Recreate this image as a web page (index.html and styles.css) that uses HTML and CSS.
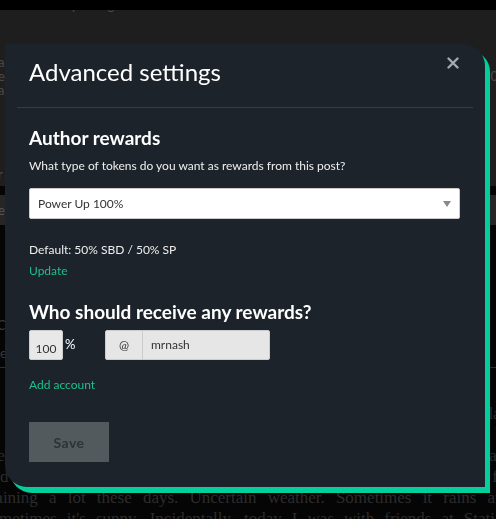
FILE: index.html
```html
<!DOCTYPE html>
<html lang="en">
<head>
  <meta charset="UTF-8">
  <meta name="viewport" content="width=device-width, initial-scale=1.0">
  <title>Advanced settings</title>
  <link rel="stylesheet" href="styles.css">
</head>
<body>

  <div class="page">
    <div class="topbar"></div>
    <div class="hero">
      <p class="hero-meta">posting to</p>
      <p class="hero-line"><span>ag</span></p>
      <p class="hero-line"><span>e</span><span>0</span></p>
      <p class="hero-line"><span>a</span></p>
      <p class="hero-line low"><span>r</span></p>
    </div>
    <div class="tabs">e</div>
    <div class="article">
      <p class="tag-row">
        <span>Categories</span>
        <span>ies</span>
      </p>
      <p class="article-text">
        <span>in this town it has been a rainy week and it is the same as last</span>
        <span>so grey outside that nobody wants to enjoy the weekend by</span>
        <span>the sea or the long walk out to the park and the coffee place</span>
        <span>and the river where we usually meet up on sundays for</span>
        <span>Raining a lot these days. Uncertain weather. Sometimes it rains and</span>
        <span>sometimes it's sunny. Incidentally, today I was with friends at Station</span>
      </p>
    </div>
  </div>

  <div class="overlay">
    <div class="modal">
      <div class="modal-header">
        <h2>Advanced settings</h2>
        <button class="close" aria-label="Close">
          <svg width="12" height="12" viewBox="0 0 12 12">
            <path d="M1.5 1.5 L10.5 10.5 M10.5 1.5 L1.5 10.5" stroke="#a3a9ae" stroke-width="2.4" stroke-linecap="round"/>
          </svg>
        </button>
      </div>

      <div class="modal-body">
        <h3>Author rewards</h3>
        <p class="hint">What type of tokens do you want as rewards from this post?</p>
        <div class="select">
          <span>Power Up 100%</span>
          <span class="caret"></span>
        </div>

        <p class="default">Default: 50% SBD / 50% SP</p>
        <a class="link">Update</a>

        <h3 class="who">Who should receive any rewards?</h3>
        <div class="beneficiary">
          <div class="pct">100</div>
          <span class="pct-sign">%</span>
          <div class="account">
            <span class="at">@</span>
            <span class="name">mrnash</span>
          </div>
        </div>

        <a class="link add">Add account</a>

        <button class="save">Save</button>
      </div>
    </div>
  </div>

</body>
</html>
```

FILE: styles.css
```css
* {
  margin: 0;
  padding: 0;
  box-sizing: border-box;
}

body {
  background-color: #050505;
  font-family: Lato, "Open Sans", sans-serif;
  overflow: hidden;
  height: 519px;
}

/* faded page behind the dialog */

.topbar {
  height: 10px;
  background: #000;
}

.hero {
  height: 176px;
  overflow: hidden;
  background: #1e1e1e;
  color: #4a4a4a;
  font-size: 13px;
}

.hero-meta {
  margin: -14px 0 0 72px;
  line-height: 18px;
}

.hero-line {
  display: flex;
  justify-content: space-between;
  line-height: 14px;
  margin-left: -2px;
  margin-right: -2px;
}

.hero-line:nth-of-type(2) {
  margin-top: 41px;
}

.hero-line.low {
  margin-top: 70px;
}

.tabs {
  margin-top: 9px;
  height: 30px;
  background: #262626;
  color: #555;
  font-size: 13px;
  line-height: 30px;
  margin-left: -2px;
}

.article {
  padding-top: 86px;
}

.tag-row {
  display: flex;
  flex-direction: column;
  color: #3a3a3a;
  font-size: 13px;
  line-height: 28px;
  border-bottom: 1px solid #2f2f2f;
  margin-left: -3px;
}

.article-text {
  margin: 35px 0 0 -16px;
  width: 528px;
  font-family: "Liberation Serif", "DejaVu Serif", serif;
  font-size: 17px;
  line-height: 21px;
  color: #2c2c2c;
}

.article-text span {
  display: block;
  white-space: nowrap;
  text-align: justify;
  text-align-last: justify;
}

/* dialog */

.overlay {
  position: fixed;
  top: 0;
  left: 0;
  right: 0;
  bottom: 0;
  padding: 44px 0 0 5px;
}

.modal {
  width: 480px;
  height: 443px;
  background: #1d232a;
  border-radius: 0 22px 0 22px;
  box-shadow: 5px 6px 0 #04cf9c;
  color: #eee;
}

.modal-header {
  margin: 0 12px;
  padding: 0 14px 0 12px;
  height: 64px;
  border-bottom: 1px solid #343d45;
  display: flex;
  justify-content: space-between;
  align-items: flex-start;
}

.modal-header h2 {
  font-weight: 400;
  font-size: 24px;
  color: #fff;
  line-height: 28px;
  margin-top: 14px;
}

.close {
  background: none;
  border: none;
  margin-top: 13px;
  width: 12px;
  height: 12px;
  cursor: pointer;
}

.modal-body {
  padding: 18px 24px 0;
}

.modal-body h3 {
  font-size: 19px;
  font-weight: 700;
  line-height: 24px;
  color: #fff;
}

.hint {
  margin-top: 7px;
  font-size: 12px;
  line-height: 18px;
  color: #eee;
}

.select {
  margin-top: 13px;
  height: 31px;
  width: 431px;
  background: #fff;
  border: 1px solid #ccc;
  border-radius: 2px;
  display: flex;
  justify-content: space-between;
  align-items: center;
  padding: 0 8px;
  font-size: 12px;
  color: #333;
}

.caret {
  width: 0;
  height: 0;
  border-left: 4px solid transparent;
  border-right: 4px solid transparent;
  border-top: 6px solid #888;
}

.default {
  margin-top: 22px;
  font-size: 12px;
  line-height: 18px;
  color: #eee;
}

.link {
  display: block;
  font-size: 12px;
  line-height: 18px;
  color: #1dbf8e;
  cursor: pointer;
  margin-top: 3px;
}

.who {
  margin-top: 20px;
}

.beneficiary {
  margin-top: 6px;
  display: flex;
  align-items: flex-start;
}

.pct {
  width: 34px;
  height: 30px;
  background: #e8e8e8;
  border: 1px solid #ccc;
  border-radius: 2px;
  font-size: 12px;
  color: #333;
  text-align: center;
  padding-top: 9px;
  line-height: 18px;
}

.pct-sign {
  width: 42px;
  padding: 6px 0 0 2px;
  font-size: 13px;
  line-height: 16px;
  color: #fff;
}

.account {
  display: flex;
  height: 30px;
  width: 165px;
  background: #e6e6e6;
  border: 1px solid #ccc;
  border-radius: 2px;
  font-size: 12px;
  color: #333;
  line-height: 28px;
}

.at {
  width: 37px;
  text-align: center;
  border-right: 1px solid #ccc;
}

.name {
  padding-left: 8px;
}

.add {
  margin-top: 16px;
}

.save {
  margin-top: 28px;
  width: 80px;
  height: 40px;
  background: #535a5e;
  border: none;
  color: #2d3338;
  font-family: Lato, "Open Sans", sans-serif;
  font-size: 14px;
  font-weight: 700;
  letter-spacing: 0.5px;
}
```
